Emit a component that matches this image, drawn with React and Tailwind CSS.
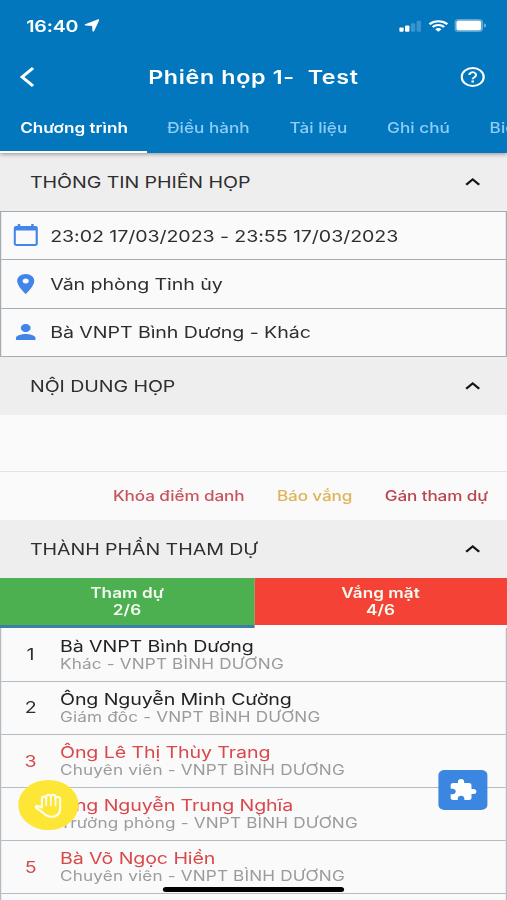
import { MdPlace, MdPerson, MdExtension, MdKeyboardArrowUp } from "react-icons/md";

const tabs = ["Điều hành", "Tài liệu", "Ghi chú", "Biểu quyết"];

const people = [
  { name: "Bà VNPT Bình Dương", role: "Khác - VNPT BÌNH DƯƠNG", absent: false },
  { name: "Ông Nguyễn Minh Cường", role: "Giám đốc - VNPT BÌNH DƯƠNG", absent: false },
  { name: "Ông Lê Thị Thùy Trang", role: "Chuyên viên - VNPT BÌNH DƯƠNG", absent: true },
  { name: "Ông Nguyễn Trung Nghĩa", role: "Trưởng phòng - VNPT BÌNH DƯƠNG", absent: true },
  { name: "Bà Võ Ngọc Hiền", role: "Chuyên viên - VNPT BÌNH DƯƠNG", absent: true },
];

function CalendarIcon() {
  return (
    <svg viewBox="0 0 20 22" className="mb-px h-[22px] w-5" fill="none" stroke="#4285e8">
      <rect x="1" y="3" width="18" height="18" rx="1.5" strokeWidth="1.8" />
      <path d="M1 4.6h18" strokeWidth="4" />
      <path d="M4.5 0v3M15.5 0v3" strokeWidth="2" />
    </svg>
  );
}

function HandIcon() {
  return (
    <svg viewBox="0 0 28 25" preserveAspectRatio="none" className="h-[25px] w-[23px]" fill="none" stroke="currentColor" strokeWidth="2.1" strokeLinejoin="round" strokeLinecap="round">
      <path d="M7.6 14.6V5.6c0-2.6 4-2.6 4.3-.4V3.6c.3-2.4 4.2-2.4 4.5 0 .3-2.4 4.4-2.4 4.7.2v1.4c.6-1.9 4.6-1.7 4.6 1V16c0 4.6-3.4 7.8-8.4 7.8-3.4 0-5.8-1.2-7.8-3.4L1.8 14.6c-1.2-1.4.6-2.2 2-1.4l3.8 1.4" />
      <path d="M11.9 5v7.4M16.4 3.6v8.8M21.1 5v7.4" strokeWidth="1.7" />
    </svg>
  );
}

function StatusBar() {
  return (
    <div className="flex h-[51px] items-center pl-[21.5px] pr-[17px] text-white">
      <span className="text-[16px] font-semibold tracking-[-0.2px]">16:40</span>
      <svg viewBox="0 0 12 13" className="ml-[5px] h-[13px] w-3" fill="currentColor">
        <path d="M11.2 0.3c.6-.2 1 .2.8.9L7.9 12c-.3.8-1.3.7-1.4-.1L6.2 7 .7 6.6c-.8-.1-.9-1-.2-1.3z" />
      </svg>
      <svg viewBox="0 0 19 12" className="ml-auto h-3 w-[18px]" fill="currentColor">
        <rect x="0" y="7.5" width="3.8" height="4.5" rx="1" />
        <rect x="5" y="5.5" width="3.8" height="6.5" rx="1" />
        <rect x="10" y="3" width="3.8" height="9" rx="1" opacity=".22" />
        <rect x="15" y="0.5" width="3.8" height="11.5" rx="1" opacity=".22" />
      </svg>
      <svg viewBox="0 0 16 12" className="ml-[6px] h-3 w-4" fill="none" stroke="currentColor" strokeWidth="2">
        <path d="M.7 4.2a10.3 10.3 0 0 1 14.6 0M3.3 7a6.6 6.6 0 0 1 9.4 0" />
        <path d="M8 11.8 5.4 9.2a3.7 3.7 0 0 1 5.2 0z" fill="currentColor" stroke="none" />
      </svg>
      <svg viewBox="0 0 26 13" className="ml-[5px] h-[13px] w-[26px]" fill="currentColor">
        <rect x="0" y="0" width="23.5" height="13" rx="3.5" opacity=".35" />
        <rect x="1.8" y="1.8" width="20" height="9.4" rx="1.8" />
        <path d="M24.2 4.5a2 2 0 0 1 0 4z" opacity=".4" />
      </svg>
    </div>
  );
}

function SectionHeader({ title }) {
  return (
    <div className="flex h-[58px] shrink-0 items-center justify-between bg-[#eeeeee] pl-[24.5px] pr-4 text-[#2e2e2e]">
      <span className="text-[16px] tracking-[-0.06px]">{title}</span>
      <MdKeyboardArrowUp className="h-6 w-6 text-[#161616]" />
    </div>
  );
}

function InfoRow({ icon, children }) {
  return (
    <div className="flex grow basis-0 items-center border-b border-[#a3acb2]">
      <div className="flex w-[40px] items-center justify-center text-[#4285e8]">{icon}</div>
      <span className="text-[16px] tracking-[-0.06px] text-[#2e2e2e]">{children}</span>
    </div>
  );
}

export default function App() {
  return (
    <div className="h-[900px] w-[507px] overflow-hidden bg-[#fafafa]">
      <div className="relative flex h-[900px] w-[414px] origin-top-left scale-x-[1.2246] flex-col overflow-hidden font-['Inter','Noto_Sans',sans-serif] whitespace-nowrap">
        <header className="z-10 flex h-[153px] shrink-0 flex-col bg-[#0277be] shadow-[0_1px_4px_rgba(0,0,0,0.4)]">
          <StatusBar />
          <div className="flex h-[52px] items-center text-white">
            <svg viewBox="0 0 12 20" className="ml-[16px] h-5 w-3" fill="none" stroke="currentColor" strokeWidth="2.6">
              <path d="M11 1 2 10l9 9" />
            </svg>
            <h1 className="ml-[93px] pt-[2px] text-[19px] font-semibold tracking-[0.53px] whitespace-pre">Phiên họp 1-  Test</h1>
            <svg viewBox="0 0 20 20" className="ml-auto mr-[18px] h-5 w-5" fill="none" stroke="currentColor" strokeWidth="1.8">
              <circle cx="10" cy="10" r="9" />
              <path d="M7.3 8a2.7 2.7 0 1 1 4.3 2.1c-1 .7-1.6 1.1-1.6 2.2" />
              <path d="M10 13.6v2" strokeWidth="2" />
            </svg>
          </div>
          <nav className="flex grow text-[14px] font-medium text-[#8fcdf6]">
            <div className="flex w-[120px] shrink-0 items-center justify-center border-b-2 border-white pl-px font-semibold text-white">Chương trình</div>
            <div className="flex items-center gap-[32.5px] pb-[2px] pl-[16.5px] tracking-[0.02px]">
              {tabs.map((tab) => (
                <span key={tab}>{tab}</span>
              ))}
            </div>
          </nav>
        </header>

        <SectionHeader title="THÔNG TIN PHIÊN HỌP" />
        <div className="flex h-[146px] shrink-0 flex-col border-x border-t border-[#a3acb2]">
          <InfoRow icon={<CalendarIcon />}>23:02 17/03/2023 - 23:55 17/03/2023</InfoRow>
          <InfoRow icon={<MdPlace className="h-6 w-6" />}>Văn phòng Tỉnh ủy</InfoRow>
          <InfoRow icon={<MdPerson className="h-6 w-6" />}>Bà VNPT Bình Dương - Khác</InfoRow>
        </div>

        <SectionHeader title="NỘI DUNG HỌP" />
        <div className="h-[57px] shrink-0 border-b border-[#e2e4e4]" />
        <div className="flex h-12 shrink-0 items-center justify-end gap-[26.5px] pr-[15.5px] pb-px text-[14px] font-medium tracking-[-0.1px]">
          <span className="text-[#c75560]">Khóa điểm danh</span>
          <span className="text-[#dfb458]">Báo vắng</span>
          <span className="text-[#b9464f]">Gán tham dự</span>
        </div>

        <SectionHeader title="THÀNH PHẦN THAM DỰ" />
        <div className="flex h-[50px] shrink-0 text-center text-[14px] leading-[17px] font-semibold tracking-[0.05px] text-[#f4fbf0]">
          <div className="w-[207.5px] border-b-[3px] border-[#3b7fa9] bg-[#4caf50] pt-[6px]">
            <div>Tham dự</div>
            <div>2/6</div>
          </div>
          <div className="grow border-b-[3px] border-[#fafafa] bg-[#f44336] pt-[6px]">
            <div>Vắng mặt</div>
            <div>4/6</div>
          </div>
        </div>

        <div className="flex shrink-0 flex-col border-x border-[#b5bbc4] pt-[0.8px]">
          {people.map((person, i) => (
            <div key={person.name} className="flex h-[53.1px] items-center border-b border-[#b5bbc4]">
              <div className={`w-12 pb-px text-center text-[16px] ${person.absent ? "text-[#d24a4d]" : "text-[#2e2e2e]"}`}>{i + 1}</div>
              <div className="flex flex-col leading-[18px]">
                <span className={`text-[16px] tracking-[-0.08px] ${person.absent ? "text-[#d9484b]" : "text-[#222222]"}`}>{person.name}</span>
                <span className="text-[14px] tracking-[0.13px] text-[#9b9b9b]">{person.role}</span>
              </div>
            </div>
          ))}
          <div className="h-[53px]" />
        </div>

        <button className="absolute top-[780px] left-[15px] flex h-[50px] w-[49px] items-center justify-center rounded-full bg-[#fde635] text-[#fffef0]">
          <HandIcon />
        </button>
        <button className="absolute top-[770px] left-[358px] flex h-10 w-10 items-center justify-center rounded-[5px] bg-[#3b86e0] text-white">
          <MdExtension className="h-6 w-6" />
        </button>
        <div className="absolute top-[887px] left-[133px] h-[5px] w-[148px] rounded-full bg-black" />
      </div>
    </div>
  );
}
